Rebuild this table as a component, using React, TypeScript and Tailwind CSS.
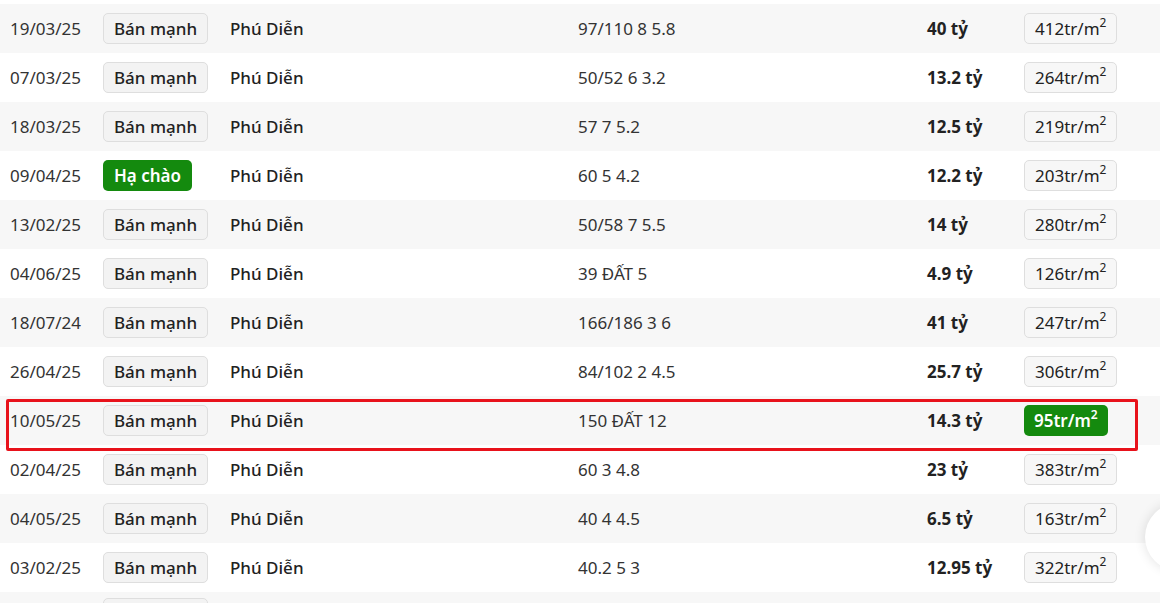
type Row = {
  date: string;
  tag: "sell" | "drop" | "blank";
  place: string;
  spec: string;
  price: string;
  ppm: string;
  highlight?: boolean;
};

const rows: Row[] = [
  { date: "19/03/25", tag: "sell", place: "Phú Diễn", spec: "97/110 8 5.8", price: "40 tỷ", ppm: "412" },
  { date: "07/03/25", tag: "sell", place: "Phú Diễn", spec: "50/52 6 3.2", price: "13.2 tỷ", ppm: "264" },
  { date: "18/03/25", tag: "sell", place: "Phú Diễn", spec: "57 7 5.2", price: "12.5 tỷ", ppm: "219" },
  { date: "09/04/25", tag: "drop", place: "Phú Diễn", spec: "60 5 4.2", price: "12.2 tỷ", ppm: "203" },
  { date: "13/02/25", tag: "sell", place: "Phú Diễn", spec: "50/58 7 5.5", price: "14 tỷ", ppm: "280" },
  { date: "04/06/25", tag: "sell", place: "Phú Diễn", spec: "39 ĐẤT 5", price: "4.9 tỷ", ppm: "126" },
  { date: "18/07/24", tag: "sell", place: "Phú Diễn", spec: "166/186 3 6", price: "41 tỷ", ppm: "247" },
  { date: "26/04/25", tag: "sell", place: "Phú Diễn", spec: "84/102 2 4.5", price: "25.7 tỷ", ppm: "306" },
  { date: "10/05/25", tag: "sell", place: "Phú Diễn", spec: "150 ĐẤT 12", price: "14.3 tỷ", ppm: "95", highlight: true },
  { date: "02/04/25", tag: "sell", place: "Phú Diễn", spec: "60 3 4.8", price: "23 tỷ", ppm: "383" },
  { date: "04/05/25", tag: "sell", place: "Phú Diễn", spec: "40 4 4.5", price: "6.5 tỷ", ppm: "163" },
  { date: "03/02/25", tag: "sell", place: "Phú Diễn", spec: "40.2 5 3", price: "12.95 tỷ", ppm: "322" },
  { date: "", tag: "blank", place: "", spec: "", price: "", ppm: "" },
];

export default function App() {
  return (
    <div
      className="relative h-[603px] w-[1160px] overflow-hidden bg-white pt-[4px] text-[17px] text-[#222]"
      style={{ fontFamily: '"Noto Sans", "Open Sans", sans-serif' }}
    >
      {rows.map((r, i) => (
        <div
          key={i}
          className={`relative grid h-[49px] grid-cols-[93px_127px_348px_349px_97px_1fr] items-center pl-[10px] ${
            i % 2 === 0 ? "bg-[#f7f7f7]" : "bg-white"
          }`}
        >
          <span className="text-[#333]">{r.date}</span>
          <div>
            {r.tag === "drop" && (
              <span className="inline-flex h-[31px] items-center rounded-[5px] bg-[#148a0e] px-[11px] font-semibold text-white">
                Hạ chào
              </span>
            )}
            {r.tag === "sell" && (
              <span className="inline-flex h-[31px] items-center rounded-[5px] border border-[#dedede] bg-[#f3f3f3] px-[10px] font-medium text-[#222]">
                Bán mạnh
              </span>
            )}
            {r.tag === "blank" && (
              <span className="inline-block h-[31px] w-[105px] rounded-[5px] border border-[#dedede] bg-[#f3f3f3]" />
            )}
          </div>
          <span className="font-medium">{r.place}</span>
          <span className="text-[#333]">{r.spec}</span>
          <span className="font-bold">{r.price}</span>
          <div>
            {r.ppm &&
              (r.highlight ? (
                <span className="inline-flex h-[31px] items-center rounded-[5px] bg-[#148a0e] px-[10px] font-semibold text-white">
                  {r.ppm}tr/m<sup className="text-[12px]">2</sup>
                </span>
              ) : (
                <span className="inline-flex h-[31px] items-center rounded-[5px] border border-[#dedede] bg-[#f7f7f7] px-[10px] text-[#222]">
                  {r.ppm}tr/m<sup className="text-[12px]">2</sup>
                </span>
              ))}
          </div>
          {r.highlight && (
            <div className="pointer-events-none absolute left-[6px] top-[3px] z-10 h-[52px] w-[1132px] rounded-[2px] border-[3px] border-[#e8121b]" />
          )}
        </div>
      ))}
      <div className="absolute left-[1145px] top-[503px] z-10 h-[68px] w-[68px] rounded-full bg-white shadow-[0_0_12px_rgba(0,0,0,0.12)]" />
    </div>
  );
}
